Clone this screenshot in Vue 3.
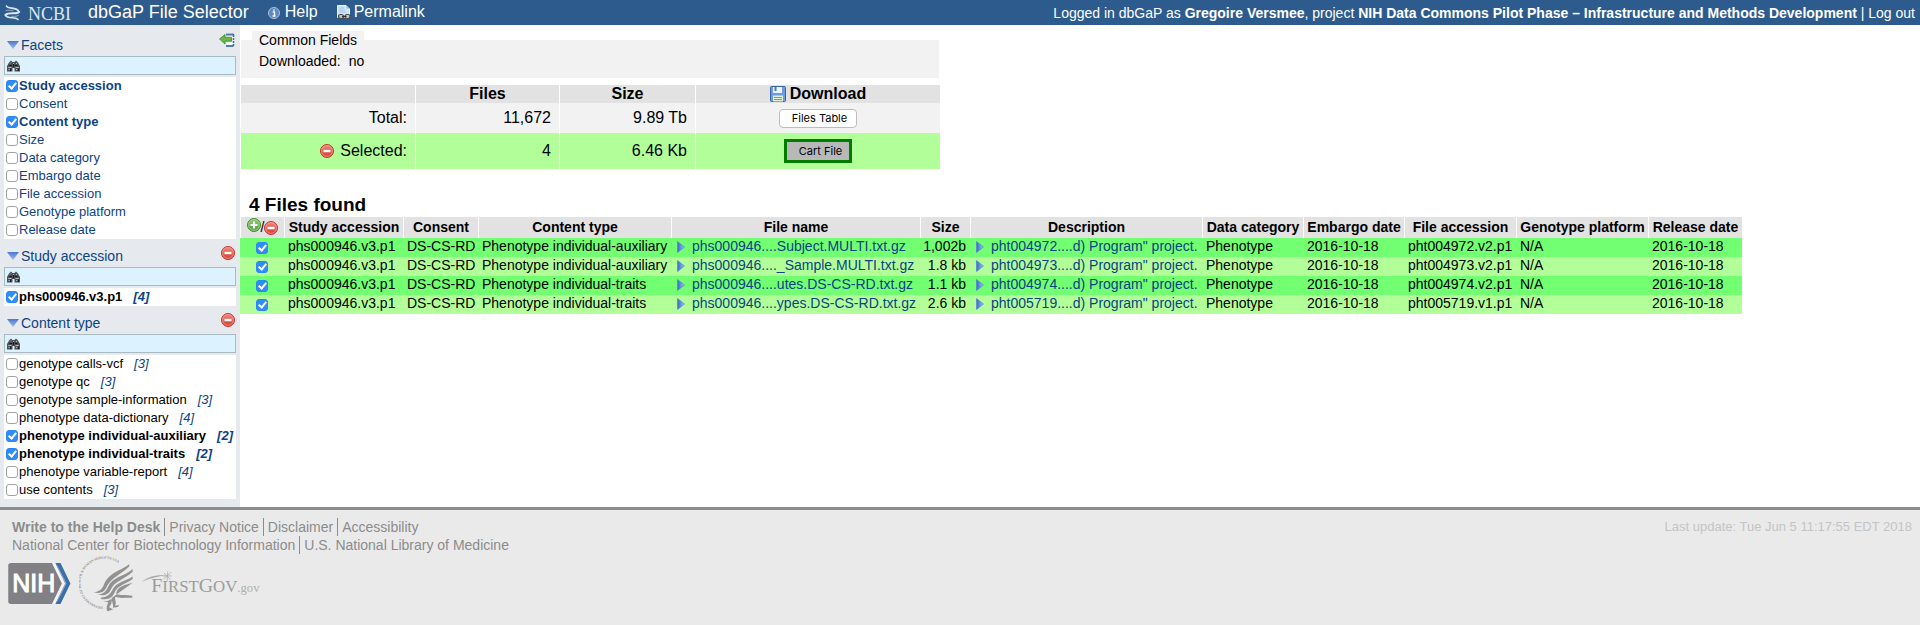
<script setup>
import { ref } from 'vue'

const panels = ref([
  {
    id: 'facets',
    title: 'Facets',
    links: true,
    items: [
      { label: 'Study accession', on: true },
      { label: 'Consent', on: false },
      { label: 'Content type', on: true },
      { label: 'Size', on: false },
      { label: 'Data category', on: false },
      { label: 'Embargo date', on: false },
      { label: 'File accession', on: false },
      { label: 'Genotype platform', on: false },
      { label: 'Release date', on: false }
    ]
  },
  {
    id: 'study',
    title: 'Study accession',
    links: false,
    items: [{ label: 'phs000946.v3.p1', count: 4, on: true }]
  },
  {
    id: 'content',
    title: 'Content type',
    links: false,
    items: [
      { label: 'genotype calls-vcf', count: 3, on: false },
      { label: 'genotype qc', count: 3, on: false },
      { label: 'genotype sample-information', count: 3, on: false },
      { label: 'phenotype data-dictionary', count: 4, on: false },
      { label: 'phenotype individual-auxiliary', count: 2, on: true },
      { label: 'phenotype individual-traits', count: 2, on: true },
      { label: 'phenotype variable-report', count: 4, on: false },
      { label: 'use contents', count: 3, on: false }
    ]
  }
])

const columns = [
  'Study accession', 'Consent', 'Content type', 'File name', 'Size', 'Description',
  'Data category', 'Embargo date', 'File accession', 'Genotype platform', 'Release date'
]

const files = ref([
  { on: true, type: 'Phenotype individual-auxiliary', name: 'phs000946....Subject.MULTI.txt.gz', size: '1,002b', desc: 'pht004972....d) Program" project.', acc: 'pht004972.v2.p1' },
  { on: true, type: 'Phenotype individual-auxiliary', name: 'phs000946...._Sample.MULTI.txt.gz', size: '1.8 kb', desc: 'pht004973....d) Program" project.', acc: 'pht004973.v2.p1' },
  { on: true, type: 'Phenotype individual-traits', name: 'phs000946....utes.DS-CS-RD.txt.gz', size: '1.1 kb', desc: 'pht004974....d) Program" project.', acc: 'pht004974.v2.p1' },
  { on: true, type: 'Phenotype individual-traits', name: 'phs000946....ypes.DS-CS-RD.txt.gz', size: '2.6 kb', desc: 'pht005719....d) Program" project.', acc: 'pht005719.v1.p1' }
])
</script>

<template>
  <div class="page">
    <svg class="defs" aria-hidden="true">
      <defs>
        <linearGradient id="g-blue" x1="0" y1="0" x2="0" y2="1">
          <stop offset="0" stop-color="#4a78d0" /><stop offset="1" stop-color="#9dbcf0" />
        </linearGradient>
        <linearGradient id="g-side" x1="0" y1="0" x2="1" y2="0">
          <stop offset="0" stop-color="#3568cc" /><stop offset="1" stop-color="#a5c4f5" />
        </linearGradient>
        <linearGradient id="g-red" x1="0" y1="0" x2="0" y2="1">
          <stop offset="0" stop-color="#f08a7c" /><stop offset="1" stop-color="#d8372c" />
        </linearGradient>
        <linearGradient id="g-green" x1="0" y1="0" x2="0" y2="1">
          <stop offset="0" stop-color="#8ccb6c" /><stop offset="1" stop-color="#4b9b3a" />
        </linearGradient>
        <symbol id="i-down" viewBox="0 0 12 8"><path d="M0 0H12L6 8Z" fill="url(#g-blue)" /></symbol>
        <symbol id="i-right" viewBox="0 0 8 12"><path d="M.5 .5L7.5 6L.5 11.5Z" fill="url(#g-side)" stroke="#4d7cd6" stroke-width=".6" /></symbol>
        <symbol id="i-minus" viewBox="0 0 14 14">
          <circle cx="7" cy="7" r="6.5" fill="url(#g-red)" stroke="#c2332b" />
          <circle cx="7" cy="7" r="5.4" fill="none" stroke="#f4a59b" stroke-width=".7" />
          <rect x="3.5" y="5.8" width="7" height="2.4" fill="#fff" />
        </symbol>
        <symbol id="i-plus" viewBox="0 0 14 14">
          <circle cx="7" cy="7" r="6.5" fill="url(#g-green)" stroke="#3f8a35" />
          <circle cx="7" cy="7" r="5.4" fill="none" stroke="#b5dda2" stroke-width=".7" />
          <path d="M7 3.5V10.5M3.5 7H10.5" stroke="#fff" stroke-width="2.2" />
        </symbol>
        <symbol id="i-find" viewBox="0 0 13 12">
          <path d="M2 2.5L4 .5L5.5 2H7.5L9 .5L11 2.5L13 6V11.5H7.5V8H5.5V11.5H0V6Z" fill="#4c5054" />
          <path d="M1.2 7.5H4.5M8.5 7.5H11.8M1.5 9.5H2.8M9 9.5H10.4M3 3.5L4 2.5M9 3L10 4M6 3.5H7" stroke="#b9c4ca" stroke-width=".9" />
          <path d="M6.5 4V7M3.6 8.5V11M11.4 8.5V11M2.5 5.5H5M8 5.5H10.5" stroke="#15181a" stroke-width="1" />
        </symbol>
      </defs>
    </svg>

    <header class="top">
      <a class="ncbi" href="#" aria-label="NCBI">
        <svg class="wave" viewBox="0 0 16 18" aria-hidden="true">
          <g fill="none" stroke="#dce6f0" stroke-linecap="round">
            <path d="M2.500 2C4 5.500 12.500 2.500 15 7.500" stroke-width="1.600" />
            <path d="M15 8C12 11 5 7.500 1.500 11" stroke-width="2" />
            <path d="M1.500 11.500C4 15.500 11 12 14 15.500" stroke-width="1.600" />
            <path d="M2 6.500C4 5.500 7 6.500 9 6.800M7.500 12.300C10 12.500 12.500 12.500 14.500 11.500" stroke-width=".8" opacity=".7" />
          </g>
        </svg>
        <span class="ncbi-name">NCBI</span>
      </a>
      <h1>dbGaP File Selector</h1>
      <a class="tool help" href="#">
        <svg class="i-info" viewBox="0 0 12 12" aria-hidden="true">
          <circle cx="6" cy="6" r="5.500" fill="#5d87bd" stroke="#a9c2df" />
          <path d="M6 2.200V3.800M4.700 5H6.500V9M4.500 9H7.600" stroke="#fff" stroke-width="1.300" fill="none" />
        </svg>Help</a>
      <a class="tool" href="#">
        <svg class="i-perma" viewBox="0 0 14 15" aria-hidden="true">
          <path d="M.5 .5H9L12.500 4V12.500H.5Z" fill="#cfe3f7" stroke="#eef6fd" />
          <path d="M9 .5V4H12.500" fill="#8fb6e0" stroke="#eef6fd" stroke-width=".7" />
          <path d="M2 3H7M2 5H8M2 7H9" stroke="#a5c8ec" />
          <rect x="1.500" y="9.500" width="5" height="4" rx="2" fill="#c5c5c5" stroke="#4a4a4a" stroke-width="1.200" />
          <rect x="8" y="9.500" width="5" height="4" rx="2" fill="#c5c5c5" stroke="#4a4a4a" stroke-width="1.200" />
          <path d="M5 11.500H9.500" stroke="#333" stroke-width="1.200" />
        </svg>Permalink</a>
      <p class="session">
        Logged in dbGaP as <b>Gregoire Versmee</b>, project
        <b>NIH Data Commons Pilot Phase – Infrastructure and Methods Development</b> | <a href="#">Log out</a>
      </p>
    </header>

    <div class="body">
      <aside class="side">
        <section v-for="p in panels" :key="p.id" class="panel">
          <div class="panel-head">
            <button type="button" class="fold">
              <svg class="i-down" aria-hidden="true"><use href="#i-down" /></svg>{{ p.title }}
            </button>
            <button v-if="p.links" type="button" class="bare collapse" aria-label="Hide facets">
              <svg class="i-collapse" viewBox="0 0 16 15" aria-hidden="true">
                <path d="M7 1.500H14.500M7 13H14.500" stroke="#4d7db0" stroke-width="2" />
                <path d="M8 4.500H13.500M8 10.500H13.500" stroke="#fff" stroke-width="2" />
                <path d="M14.500 1V4M14.500 5V7M14.500 8V10M14.500 11V13" stroke="#4a6785" stroke-width="1.500" />
                <path d="M.5 6L6 1.500V4.300H12.500V8.200H6V11Z" fill="#6cb649" stroke="#3c8a2c" stroke-width=".8" />
              </svg>
            </button>
            <button v-else type="button" class="bare" :aria-label="'Remove ' + p.title">
              <svg class="i-round" aria-hidden="true"><use href="#i-minus" /></svg>
            </button>
          </div>
          <div class="find">
            <svg class="i-find" aria-hidden="true"><use href="#i-find" /></svg>
            <input type="text" :aria-label="'Find in ' + p.title">
          </div>
          <ul class="list">
            <li v-for="item in p.items" :key="item.label" :class="{ on: item.on, link: p.links }">
              <label><input v-model="item.on" type="checkbox" class="tick">{{ item.label }}</label>
              <a v-if="item.count" class="count" href="#">[{{ item.count }}]</a>
            </li>
          </ul>
        </section>
      </aside>

      <main class="main">
        <fieldset class="common">
          <legend>Common Fields</legend>
          <p>Downloaded: <span class="val">no</span></p>
        </fieldset>

        <table class="summary">
          <colgroup><col class="s1"><col class="s2"><col class="s3"><col class="s4"></colgroup>
          <thead>
            <tr>
              <td></td>
              <th scope="col">Files</th>
              <th scope="col">Size</th>
              <th scope="col">
                <span class="dl">
                  <svg class="i-disk" viewBox="0 0 16 16" aria-hidden="true">
                    <rect x=".5" y=".5" width="15" height="15" rx="1" fill="#6f9be0" stroke="#3a63ae" />
                    <rect x="3" y="1" width="9" height="6" fill="#eef4fc" />
                    <rect x="4.500" y="1" width="2" height="4" fill="#4a76c4" />
                    <rect x="3" y="9.500" width="10" height="6" fill="#dff0d8" />
                    <path d="M4 11.500H12M4 13.500H12" stroke="#6fae5c" />
                  </svg>Download
                </span>
              </th>
            </tr>
          </thead>
          <tbody>
            <tr class="total">
              <th scope="row">Total:</th>
              <td>11,672</td>
              <td>9.89 Tb</td>
              <td class="act"><button type="button" class="btn">Files Table</button></td>
            </tr>
            <tr class="selected">
              <th scope="row">
                <span class="sel">
                  <button type="button" class="bare" aria-label="Clear selection">
                    <svg class="i-round" aria-hidden="true"><use href="#i-minus" /></svg>
                  </button>Selected:
                </span>
              </th>
              <td>4</td>
              <td>6.46 Kb</td>
              <td class="act"><button type="button" class="btn cart">Cart File</button></td>
            </tr>
          </tbody>
        </table>

        <h2>4 Files found</h2>

        <table class="files">
          <colgroup>
            <col class="c0"><col class="c1"><col class="c2"><col class="c3"><col class="c4"><col class="c5">
            <col class="c6"><col class="c7"><col class="c8"><col class="c9"><col class="c10"><col class="c11">
          </colgroup>
          <thead>
            <tr>
              <td>
                <span class="pm">
                  <button type="button" class="bare up" aria-label="Select all">
                    <svg class="i-round" aria-hidden="true"><use href="#i-plus" /></svg>
                  </button>/<button type="button" class="bare down" aria-label="Deselect all">
                    <svg class="i-round" aria-hidden="true"><use href="#i-minus" /></svg>
                  </button>
                </span>
              </td>
              <th v-for="c in columns" :key="c" scope="col">{{ c }}</th>
            </tr>
          </thead>
          <tbody>
            <tr v-for="f in files" :key="f.name">
              <td class="pick"><input v-model="f.on" type="checkbox" class="tick" :aria-label="f.name"></td>
              <td>phs000946.v3.p1</td>
              <td>DS-CS-RD</td>
              <td>{{ f.type }}</td>
              <td>
                <a class="more" href="#"><svg class="i-right" aria-hidden="true"><use href="#i-right" /></svg>{{ f.name }}</a>
              </td>
              <td class="num">{{ f.size }}</td>
              <td>
                <a class="more" href="#"><svg class="i-right" aria-hidden="true"><use href="#i-right" /></svg>{{ f.desc }}</a>
              </td>
              <td>Phenotype</td>
              <td>2016-10-18</td>
              <td>{{ f.acc }}</td>
              <td>N/A</td>
              <td>2016-10-18</td>
            </tr>
          </tbody>
        </table>
      </main>
    </div>

    <footer class="foot">
      <div class="foot-main">
        <nav>
          <a href="#"><b>Write to the Help Desk</b></a>
          <a href="#">Privacy Notice</a>
          <a href="#">Disclaimer</a>
          <a href="#">Accessibility</a>
        </nav>
        <nav>
          <a href="#">National Center for Biotechnology Information</a>
          <a href="#">U.S. National Library of Medicine</a>
        </nav>
        <div class="logos">
          <a href="#" aria-label="NIH">
            <svg class="nih" viewBox="23 183 183 120" aria-hidden="true">
              <path d="M31 183H155L182 243L155 303H31Q23 303 23 295V191Q23 183 31 183Z" fill="#808085" />
              <path d="M151 183H161L188 243L161 303H151L180 243Z" fill="#f4f4f4" />
              <path d="M161 183H176L205 243L176 303H161L190 243Z" fill="#3d6ea5" />
              <path d="M165 190L192 243L165 296" fill="none" stroke="#8fb0d2" stroke-width="3" />
              <text x="35" y="269" font-size="73" fill="#fff" font-family="Liberation Sans, Arial, sans-serif" stroke="#fff" stroke-width="3">NIH</text>
            </svg>
          </a>
          <a href="#" aria-label="Health and Human Services">
            <svg class="hhs" viewBox="229 160 160 168" aria-hidden="true">
              <defs><path id="seal" d="M298 313A70 70 0 1 1 366 212" /></defs>
              <text font-size="10" font-weight="bold" fill="#8e8e8e" font-family="Liberation Serif, Times New Roman, serif">
                <textPath href="#seal">DEPARTMENT OF HEALTH &amp; HUMAN SERVICES USA</textPath>
              </text>
              <g fill="#929292">
                <path d="M375 189C354 208 316 212 301 250C296 262 288 269 272 271C288 276 302 272 308 258C320 230 352 218 375 196Z" />
                <path d="M385 203C362 224 326 226 314 254C308 268 300 276 284 277C304 284 316 276 322 262C332 238 364 232 385 211Z" />
                <path d="M385 225C364 240 338 240 326 264C320 276 312 284 294 286C290 288 292 292 300 291C318 292 328 284 333 270C340 252 366 246 385 232Z" />
                <path d="M385 243C364 250 344 252 338 270C334 282 350 276 384 281V287C362 286 346 290 336 284C330 290 340 300 334 310L346 308L342 314L328 316C330 304 322 296 326 286Z" />
                <path d="M300 296C312 298 320 294 324 288C326 300 322 308 316 314L328 321L312 326C306 318 312 308 314 300Z" />
              </g>
            </svg>
          </a>
          <a href="#" aria-label="FirstGov">
            <svg class="gov" viewBox="408 208 350 78" aria-hidden="true">
              <path d="M410 242C430 226 450 222 482 222C450 228 430 232 410 242Z" fill="#aaa" />
              <path d="M475 216L494 236M496 214L474 234M470 225H497M486 212L484 240" stroke="#a4a4a4" stroke-width="2" />
              <text x="438" y="273" fill="#9c9c9c" font-family="Liberation Serif, Times New Roman, serif" font-size="49"><tspan font-size="58">F</tspan>IRST<tspan font-size="58">G</tspan>OV<tspan font-size="37" fill="#b0b0b0">.gov</tspan></text>
            </svg>
          </a>
        </div>
      </div>
      <p class="update">Last update: Tue Jun 5 11:17:55 EDT 2018</p>
    </footer>
  </div>
</template>

<style>
body { margin: 0; background: #fff; }
</style>

<style scoped>
.page {
  min-height: 100vh;
  display: flex;
  flex-direction: column;
  font-family: "Liberation Sans", Arial, Helvetica, sans-serif;
  font-size: 14px;
  line-height: 18px;
  color: #000;
}
.defs { position: absolute; width: 0; height: 0; }
svg { display: block; flex: none; }
a { color: inherit; text-decoration: none; }
h1, h2, p, ul { margin: 0; padding: 0; }
button { font: inherit; color: inherit; cursor: pointer; }
.bare { display: block; padding: 0; border: 0; background: none; }

.top {
  height: 25px;
  box-sizing: border-box;
  padding: 0 5px 0 4px;
  display: flex;
  align-items: center;
  background: #2d5b8d;
  color: #fff;
  white-space: nowrap;
}
.ncbi { width: 84px; display: flex; align-items: center; gap: 8px; }
.wave { width: 16px; height: 18px; }
.ncbi-name { font-family: "Liberation Serif", "Times New Roman", serif; font-size: 18px; color: #dce6f0; padding-top: 2px; }
h1 { font-size: 18px; font-weight: normal; line-height: 24px; padding-bottom: 2px; }
.tool { display: flex; align-items: center; gap: 3px; font-size: 16px; padding-bottom: 2px; }
.help { margin: 0 19px; gap: 5px; }
.i-info { width: 12px; height: 12px; margin-top: 2px; }
.i-perma { width: 14px; height: 15px; margin-top: 2px; }
.session { margin-left: auto; }

.body { display: flex; }
.side {
  flex: none;
  width: 240px;
  box-sizing: border-box;
  padding: 3px 4px 8px;
  background: #e6eaee;
}
.panel-head {
  height: 28px;
  display: flex;
  align-items: center;
  justify-content: space-between;
  padding: 0 1px 0 3px;
}
.panel-head > .collapse { padding-bottom: 3px; }
.fold {
  display: flex;
  align-items: center;
  gap: 2px;
  padding: 6px 0 0;
  border: 0;
  background: none;
  color: #0c4383;
}
.i-down { width: 12px; height: 8px; }
.i-round { width: 14px; height: 14px; }
.i-collapse { width: 16px; height: 15px; }
.find {
  display: flex;
  align-items: center;
  height: 19px;
  box-sizing: border-box;
  padding-left: 2px;
  margin-bottom: 2px;
  border: 1px solid #a9bac2;
  background: #dcf2fe;
}
.i-find { width: 13px; height: 12px; }
.find input { flex: 1; min-width: 0; height: 15px; padding: 0 2px; border: 0; outline: 0; background: none; font: inherit; }
.list { list-style: none; background: #fff; font-size: 13px; }
.list li { height: 18px; display: flex; align-items: center; padding-left: 2px; white-space: nowrap; }
.list label { display: flex; align-items: center; gap: 1px; }
.list .on { font-weight: bold; }
.list .link { color: #0c4383; }
.count { margin-left: 11px; font-style: italic; color: #0c4383; }

.tick {
  appearance: none;
  position: relative;
  flex: none;
  width: 12px;
  height: 12px;
  margin: 0;
  border: 1px solid #a3a3a3;
  border-radius: 3px;
  background: #fff;
}
.tick:checked { border-color: #2a86f5; background: #2f8cf8; }
.tick:checked::after {
  content: "";
  position: absolute;
  left: 3px;
  top: 0;
  width: 3px;
  height: 6px;
  border: solid #fff;
  border-width: 0 2px 2px 0;
  transform: rotate(40deg);
}

.main { flex: 1; min-width: 0; padding-top: 6px; }
.common {
  max-width: 680px;
  margin: 0 0 7px 1px;
  padding: 8px 7px 12px 11px;
  min-width: 0;
  border: 0;
  background: #f2f2f2;
}
.common legend { padding: 0 7px; background: #f2f2f2; }
.common p { margin: 0; padding-left: 7px; line-height: 9px; }
.common .val { margin-left: 4px; }

table { border-spacing: 0; table-layout: fixed; }
th, td { padding: 0; }
.summary { width: 700px; font-size: 16px; margin-bottom: 20px; }
.s1 { width: 175px; } .s2 { width: 144px; } .s3 { width: 136px; } .s4 { width: 245px; }
.summary th, .summary td { border-left: 1px solid #fff; padding-right: 8px; text-align: right; }
.summary thead th, .summary thead td { height: 18px; padding: 0; text-align: center; background: #e2e2e2; }
.summary tbody th { font-weight: normal; }
.total { height: 30px; background: #f2f2f2; }
.selected { height: 36px; background: #b2ff99; }
.summary .act { padding: 0; text-align: center; }
.dl, .sel { display: inline-flex; align-items: center; gap: 4px; vertical-align: top; }
.sel { gap: 6px; }
.i-disk { width: 16px; height: 16px; }
.btn {
  height: 19px;
  padding: 0 9px 0 12px;
  border: 1px solid #bdbdbd;
  border-radius: 4px;
  background: #fff;
  color: #000;
  font-family: Inter, "Liberation Sans", sans-serif;
  font-size: 11px;
  line-height: 16px;
}
.cart { height: 24px; padding: 0 7px 0 12px; border: 3px solid #007d00; border-radius: 0; background: #b8b8b8; }

h2 { padding: 4px 0 0 9px; font-size: 19px; line-height: 24px; }

.files { width: 1502px; white-space: nowrap; }
.c0 { width: 44px; } .c1 { width: 119px; } .c2 { width: 75px; } .c3 { width: 193px; }
.c4 { width: 249px; } .c5 { width: 50px; } .c6 { width: 232px; } .c7 { width: 101px; }
.c8 { width: 101px; } .c9 { width: 112px; } .c10 { width: 132px; } .c11 { width: 94px; }
.files thead th, .files thead td { height: 19px; padding-bottom: 2px; border-left: 1px solid #fff; background: #e2e2e2; text-align: center; }
.files tbody td { height: 19px; padding-left: 4px; line-height: 17px; vertical-align: top; }
.files tbody tr { background: #b2ff99; }
.files tbody tr:nth-child(odd) { background: #72ff72; }
.files .pick { padding: 4px 0 0 16px; height: 15px; line-height: 0; }
.files .num { padding: 0 4px 0 0; text-align: right; }
.pm { display: flex; justify-content: center; align-items: center; }
.up { padding-bottom: 3px; }
.down { padding-top: 3px; }
.more { display: flex; align-items: center; gap: 7px; padding-left: 2px; color: #0c4383; }
.i-right { width: 8px; height: 12px; }

.foot {
  flex: 1;
  display: flex;
  justify-content: space-between;
  align-items: flex-start;
  padding: 8px 8px 12px 8px;
  border-top: 3px solid #8c8c8c;
  background: #eaeaea;
  color: #8c8c8c;
}
.foot nav { display: flex; padding-left: 4px; }
.foot nav a + a { margin-left: 4px; padding-left: 4px; border-left: 1px solid #8c8c8c; }
.logos { display: flex; align-items: center; }
.nih { width: 63px; height: 41px; }
.hhs { width: 55px; height: 58px; margin: 0 7px 0 8px; }
.gov { width: 120px; height: 27px; }
.update { font-size: 13px; color: #c4c4c4; }
</style>
